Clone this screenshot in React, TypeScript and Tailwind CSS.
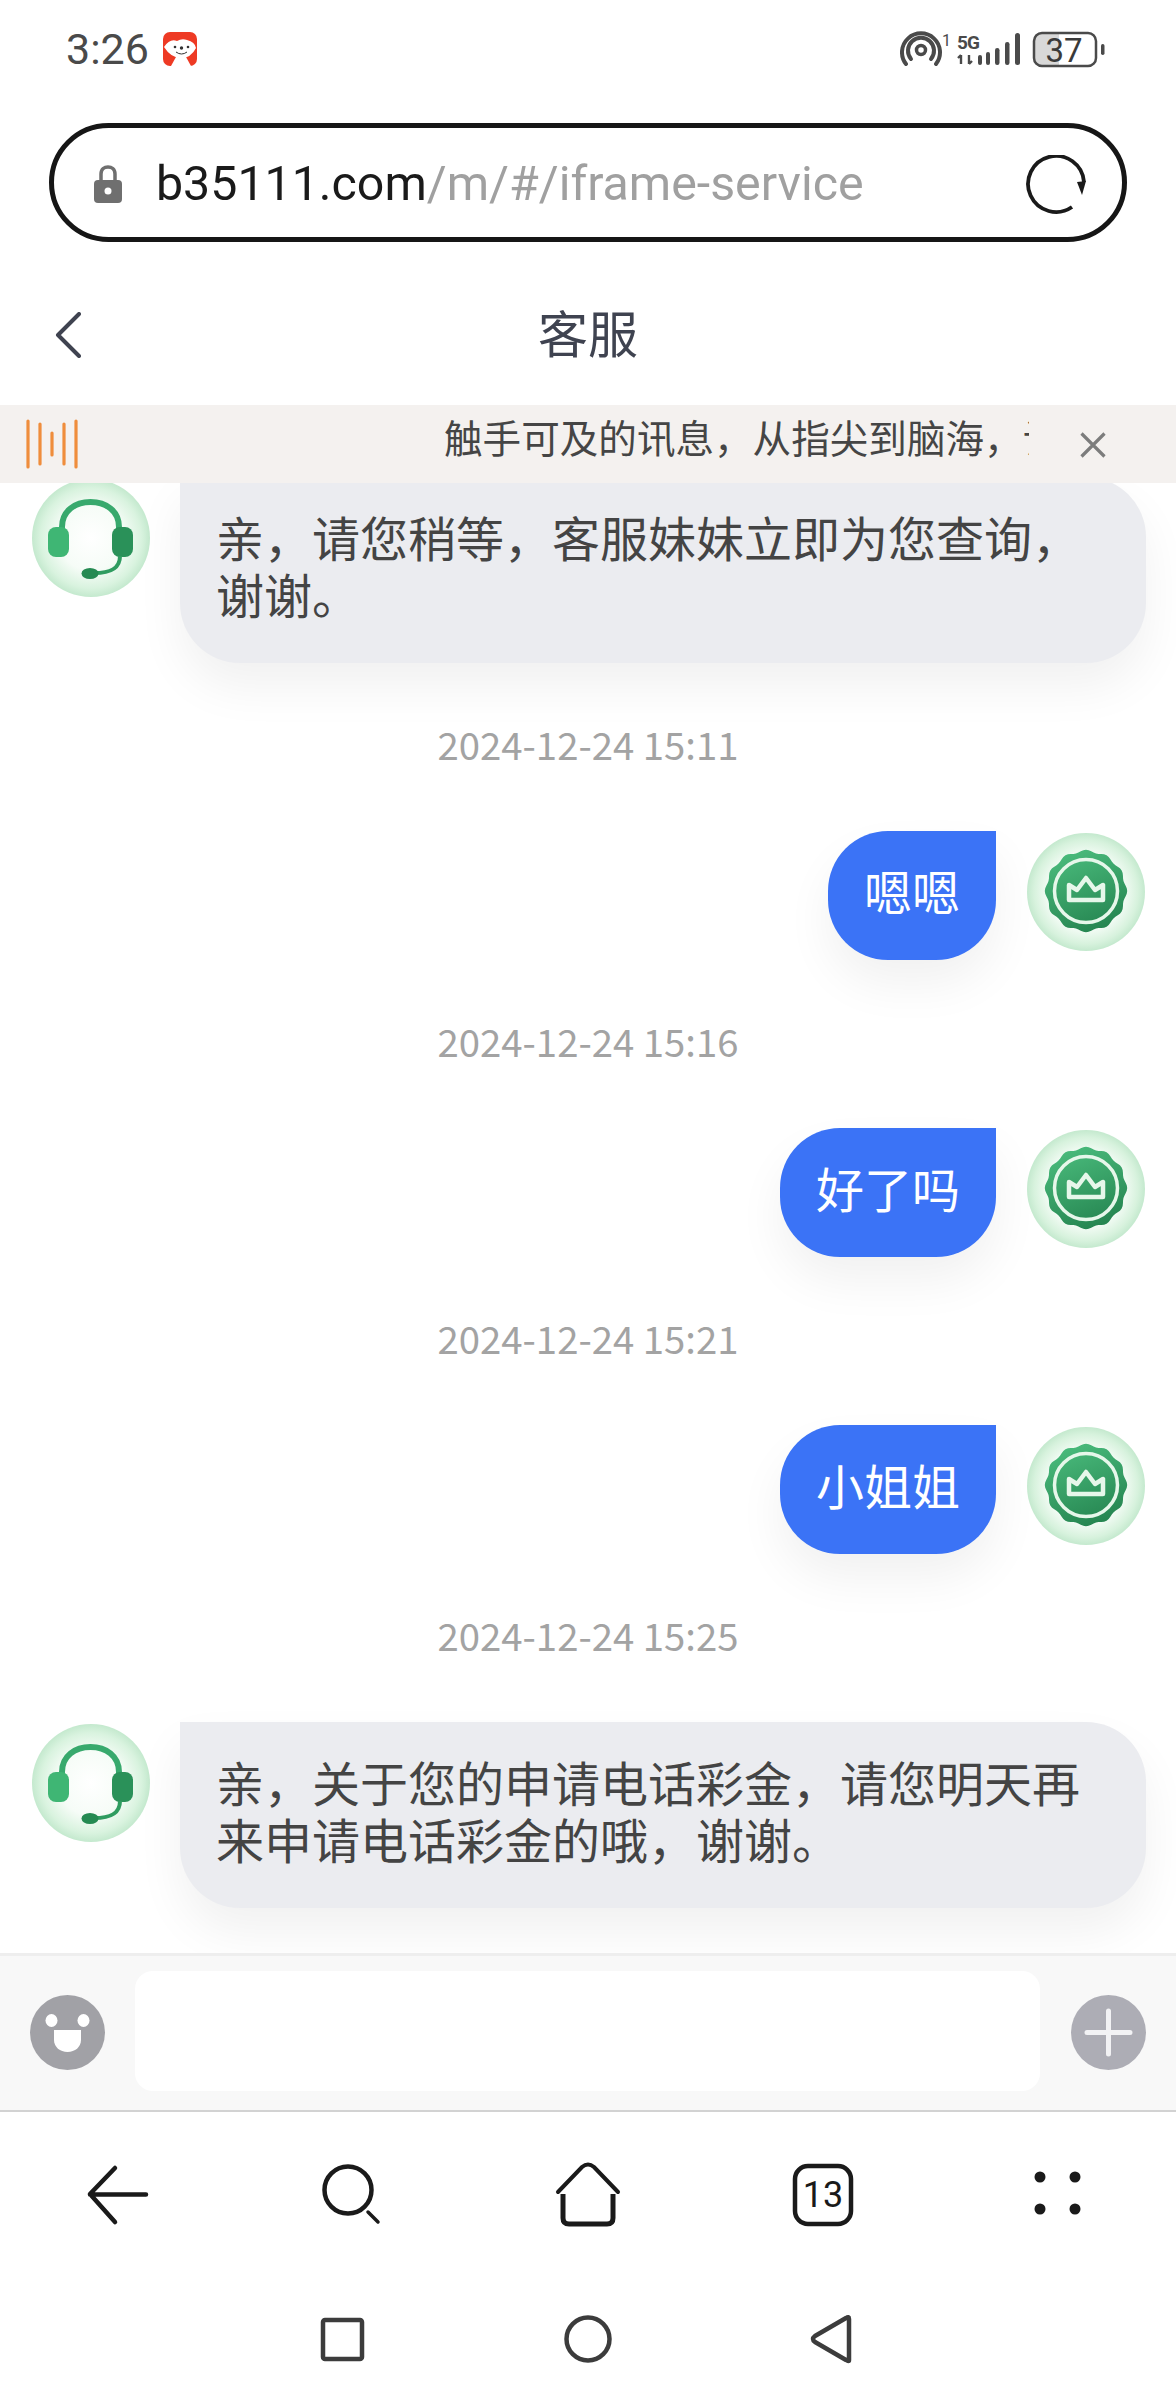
import React from "react";

const cjk = "font-['Noto_Sans_CJK_SC','Noto_Sans',sans-serif]";
const C = "\uFF0C";

function AgentAvatar() {
  return (
    <svg viewBox="0 0 118 118" className="w-[118px] h-[118px] shrink-0 mt-[2px]">
      <defs>
        <radialGradient id="ag" cx="50%" cy="50%" r="50%">
          <stop offset="0%" stopColor="#ffffff" />
          <stop offset="55%" stopColor="#f6fcf7" />
          <stop offset="85%" stopColor="#d9f3df" />
          <stop offset="100%" stopColor="#c4e9ce" />
        </radialGradient>
      </defs>
      <circle cx="59" cy="59" r="59" fill="url(#ag)" />
      <path d="M30 50 V48 C30 32 43 23 58.500 23 C74 23 87 32 87 48 V50" fill="none" stroke="#38a96d" strokeWidth="6" />
      <rect x="16" y="48" width="21" height="30" rx="8" fill="#3fb674" />
      <rect x="80" y="48" width="21" height="30" rx="8" fill="#2a9159" />
      <path d="M88 77 C88 90 78 94 62 94" fill="none" stroke="#2f9c60" strokeWidth="4" />
      <ellipse cx="58" cy="94.500" rx="8.500" ry="5.500" fill="#258a52" />
    </svg>
  );
}

function UserAvatar() {
  const pts: string[] = [];
  for (let i = 0; i < 96; i++) {
    const a = (i / 96) * Math.PI * 2;
    const r = 40 + 1.2 * Math.cos(a * 12);
    pts.push(`${(59 + r * Math.sin(a)).toFixed(2)},${(58 - r * Math.cos(a)).toFixed(2)}`);
  }
  return (
    <svg viewBox="0 0 118 118" className="w-[118px] h-[118px] shrink-0">
      <defs>
        <radialGradient id="ug" cx="50%" cy="50%" r="50%">
          <stop offset="0%" stopColor="#ffffff" />
          <stop offset="65%" stopColor="#f2fbf4" />
          <stop offset="88%" stopColor="#d7f2dd" />
          <stop offset="100%" stopColor="#c4e9ce" />
        </radialGradient>
        <linearGradient id="ub" x1="0.3" y1="0" x2="0.7" y2="1">
          <stop offset="0%" stopColor="#4abb7c" />
          <stop offset="100%" stopColor="#24834f" />
        </linearGradient>
      </defs>
      <circle cx="59" cy="59" r="59" fill="url(#ug)" />
      <polygon points={pts.join(" ")} fill="url(#ub)" />
      <circle cx="59" cy="58" r="31.500" fill="none" stroke="#e6f7ea" strokeWidth="3.500" />
      <path d="M42 52 L50 57 L59 45 L68 57 L76 52 V67 H42 Z" fill="none" stroke="#e6f7ea" strokeWidth="4.500" strokeLinejoin="round" />
    </svg>
  );
}

function StatusBar() {
  return (
    <div className="h-[100px] mb-[23px] pl-[66px] pr-[68px] flex items-center justify-between text-[#4a4a4a]">
      <div className="flex items-center gap-[14px] -mt-[2px]">
        <span className="text-[43px] leading-none font-['Roboto',sans-serif]">3:26</span>
        <svg viewBox="0 0 34 34" className="w-[34px] h-[34px]">
          <rect width="34" height="34" rx="7" fill="#ee3a24" />
          <path d="M1 15 Q7 6 14 9 Q19 6 24 8 Q32 10 33 16 Q28 26 18 26 Q8 26 1 15 Z" fill="#fff" />
          <path d="M8 34 L13 25 H23 L28 34 Z" fill="#fff" />
          <circle cx="12" cy="15" r="1.300" fill="#333" />
          <circle cx="25" cy="15" r="1.300" fill="#333" />
          <circle cx="18.500" cy="16" r="1.700" fill="#333" />
          <path d="M13 20 Q18.500 24 24 20" fill="none" stroke="#333" strokeWidth="1" />
        </svg>
      </div>
      <svg viewBox="900 28 208 42" className="w-[208px] h-[42px] -mt-[2px]" fill="none">
        <circle cx="921" cy="50" r="4.500" stroke="#4a4a4a" strokeWidth="3.500" />
        <path d="M911 59 A 13 13 0 1 1 931 59" stroke="#4a4a4a" strokeWidth="4" strokeLinecap="round" />
        <path d="M906 64 A 19 19 0 1 1 936 64" stroke="#4a4a4a" strokeWidth="4" strokeLinecap="round" />
        <text x="942" y="46" fontSize="16" fill="#4a4a4a" fontFamily="Roboto">1</text>
        <text x="957" y="49" fontSize="19" fontWeight="700" fill="#4a4a4a" fontFamily="Roboto" textLength="23">5G</text>
        <path d="M961 55 V64 M961 55 L958 58 M969 55 V64 M969 64 L972 61" stroke="#4a4a4a" strokeWidth="2.400" />
        <rect x="978" y="55" width="4" height="10" rx="2" fill="#4a4a4a" />
        <rect x="986" y="52" width="4" height="13" rx="2" fill="#4a4a4a" />
        <rect x="995" y="48" width="4.500" height="17" rx="2.200" fill="#4a4a4a" />
        <rect x="1005" y="42" width="4.500" height="23" rx="2.200" fill="#4a4a4a" />
        <rect x="1015" y="33" width="5" height="32" rx="2.500" fill="#4a4a4a" />
        <path d="M1040 33 H1059 V66 H1040 Q1034 66 1034 60 V39 Q1034 33 1040 33 Z" fill="#d8d8d8" />
        <rect x="1034" y="33" width="62" height="33" rx="8" stroke="#4a4a4a" strokeWidth="2.500" />
        <text x="1064" y="62" fontSize="33" fill="#3a3a3a" textAnchor="middle" fontFamily="Roboto">37</text>
        <rect x="1101" y="44" width="3.500" height="11" rx="1.700" fill="#4a4a4a" />
      </svg>
    </div>
  );
}

function UrlBar() {
  return (
    <div className="mx-[49px] h-[119px] rounded-full border-[5px] border-[#161616] flex items-center pl-[40px] pr-[36px]">
      <svg viewBox="0 0 28 38" className="w-[28px] h-[38px] shrink-0 mr-[34px] mt-[2px]">
        <path d="M7 16 V9 C7 4 10.500 2 14 2 C17.500 2 21 4 21 9 V16" fill="none" stroke="#6f6f6f" strokeWidth="3.500" />
        <rect x="0" y="15" width="28" height="23" rx="4" fill="#6f6f6f" />
        <circle cx="14" cy="26" r="3.500" fill="#fff" />
      </svg>
      <div className="flex-1 text-[48.3px] leading-none font-['Roboto',sans-serif] whitespace-nowrap mt-[4px]">
        <span className="text-[#1a1a1a]">b35111.com</span>
        <span className="text-[#a0a0a0]">/m/#/iframe-service</span>
      </div>
      <svg viewBox="0 0 60 60" className="w-[60px] h-[60px] shrink-0 mt-[5px]" fill="none">
        <path d="M46 52 A 28 28 0 1 1 58 27" stroke="#1a1a1a" strokeWidth="3.800" />
        <path d="M51 27 L60 26 L56 40 Z" fill="#1a1a1a" />
      </svg>
    </div>
  );
}

function Header() {
  return (
    <div className="mt-[19px] h-[144px] relative flex items-center justify-center">
      <svg viewBox="0 0 26 46" className="absolute left-[55px] top-[51px] w-[26px] h-[46px]" fill="none">
        <path d="M24 2 L3 23 L24 44" stroke="#3f4350" strokeWidth="4" strokeLinecap="round" strokeLinejoin="round" />
      </svg>
      <span className={`text-[50px] leading-none text-[#3f4350] -mt-[5px] ${cjk}`}>客服</span>
    </div>
  );
}

function Notice() {
  return (
    <div className="h-[78px] bg-[#f4f1ef] flex items-center relative shrink-0 z-10">
      <svg viewBox="0 0 54 50" className="absolute left-[26px] top-[14px] w-[54px] h-[50px]" fill="none" stroke="#ef8d3c" strokeWidth="3.200" strokeLinecap="round">
        <path d="M2 2 V48 M14 5 V45 M26 14 V36 M38 5 V45 M50 2 V48" />
      </svg>
      <div className={`absolute left-[444px] top-[7px] w-[585px] overflow-hidden whitespace-nowrap text-[38.6px] leading-[48px] text-[#454545] ${cjk}`}>
        {`触手可及的讯息${C}从指尖到脑海${C}让`}
      </div>
      <svg viewBox="0 0 26 26" className="absolute left-[1080px] top-[27px] w-[26px] h-[26px]" fill="none" stroke="#7c7c7c" strokeWidth="3.200">
        <path d="M1.500 1.500 L24.500 24.500 M24.500 1.500 L1.500 24.500" />
      </svg>
    </div>
  );
}

function Stamp({ t }: { t: string }) {
  return (
    <div className={`h-[48px] my-[60px] shrink-0 text-center text-[38.3px] leading-[42px] text-[#a3a3a3] ${cjk}`}>{t}</div>
  );
}

function Agent({ lines }: { lines: string[] }) {
  return (
    <div className="flex shrink-0 items-start pl-[32px] pr-[30px] gap-[30px]">
      <AgentAvatar />
      <div className={`flex-1 bg-[#ebecf0] rounded-[60px] rounded-tl-none px-[36px] pt-[31px] pb-[41px] text-[48px] leading-[57px] text-[#444444] shadow-[0_24px_48px_rgba(0,0,0,0.06)] ${cjk}`}>
        {lines.map((l) => (
          <div key={l} className="whitespace-nowrap">{l}</div>
        ))}
      </div>
    </div>
  );
}

function Me({ text }: { text: string }) {
  return (
    <div className="flex shrink-0 items-start justify-end pr-[31px] gap-[31px]">
      <div className={`bg-[#3b73f6] rounded-[60px] rounded-tr-none px-[36px] pt-[31px] pb-[41px] text-[48px] leading-[57px] text-white shadow-[0_24px_48px_rgba(0,0,0,0.06)] ${cjk}`}>
        {text}
      </div>
      <div className="mt-[2px]"><UserAvatar /></div>
    </div>
  );
}

function Chat() {
  return (
    <div className="h-[1470px] overflow-hidden flex flex-col justify-end pb-[45px] bg-white">
      <Agent lines={[`亲${C}请您稍等${C}客服妹妹立即为您查询${C}`, "谢谢。"]} />
      <Stamp t="2024-12-24 15:11" />
      <Me text="嗯嗯" />
      <Stamp t="2024-12-24 15:16" />
      <Me text="好了吗" />
      <Stamp t="2024-12-24 15:21" />
      <Me text="小姐姐" />
      <Stamp t="2024-12-24 15:25" />
      <Agent lines={[`亲${C}关于您的申请电话彩金${C}请您明天再`, `来申请电话彩金的哦${C}谢谢。`]} />
    </div>
  );
}

function InputBar() {
  return (
    <div className="h-[159px] bg-[#f8f8f8] border-t-[3px] border-t-[#eeeeee] border-b-[2px] border-b-[#d2d2d2] flex items-start pl-[30px] pr-[30px]">
      <svg viewBox="0 0 75 75" className="w-[75px] h-[75px] mt-[39px] shrink-0">
        <circle cx="37.500" cy="37.500" r="37.500" fill="#a1a1a6" />
        <ellipse cx="21.500" cy="25.500" rx="6" ry="6.500" fill="#fff" />
        <ellipse cx="53.500" cy="25.500" rx="6" ry="6.500" fill="#fff" />
        <path d="M24 35 H51 V45 C51 52 45 57 37.500 57 C30 57 24 52 24 45 Z" fill="#fff" />
      </svg>
      <div className="ml-[30px] mt-[15px] w-[905px] h-[120px] bg-white rounded-[18px]" />
      <svg viewBox="0 0 75 75" className="w-[75px] h-[75px] ml-[31px] mt-[39px] shrink-0">
        <circle cx="37.500" cy="37.500" r="37.500" fill="#adadb5" />
        <path d="M37.500 16 V59 M16 37.500 H59" stroke="#f2f2f4" strokeWidth="5" strokeLinecap="round" />
      </svg>
    </div>
  );
}

function BrowserNav() {
  return (
    <div className="h-[200px]">
      <svg viewBox="0 0 1176 200" className="w-full h-full" fill="none" stroke="#1a1a1a">
        <path d="M146 82.500 H90 M115 56 L90 82 L115 110" strokeWidth="4.500" strokeLinecap="round" strokeLinejoin="round" />
        <circle cx="348" cy="78" r="23.500" strokeWidth="4.500" />
        <path d="M368 100 L378 110" strokeWidth="3.500" strokeLinecap="round" />
        <path d="M558 80 L582 55 Q588 50 594 55 L618 80" strokeWidth="4" strokeLinecap="round" />
        <path d="M563 82 V106 Q563 112 569 112 H607 Q613 112 613 106 V82" strokeWidth="5" />
        <rect x="795" y="54" width="56" height="58" rx="13" strokeWidth="4.500" />
        <text x="823" y="95" fontSize="36" fill="#1a1a1a" stroke="none" textAnchor="middle" fontFamily="Roboto">13</text>
        <g fill="#1a1a1a" stroke="none">
          <circle cx="1040" cy="65" r="5.500" />
          <circle cx="1075" cy="65" r="5.500" />
          <circle cx="1040" cy="97" r="5.500" />
          <circle cx="1075" cy="97" r="5.500" />
        </g>
      </svg>
    </div>
  );
}

function SystemNav() {
  return (
    <div className="h-[88px]">
      <svg viewBox="0 0 1176 88" className="w-full h-full" fill="none" stroke="#3c3c3c" strokeWidth="4.500">
        <rect x="323" y="8" width="39" height="39" rx="2" />
        <circle cx="588" cy="27" r="21.500" />
        <path d="M849 7 V48 Q849 50 846 48 L815 30 Q811 27 815 24 L846 6 Q849 4 849 7 Z" strokeLinejoin="round" />
      </svg>
    </div>
  );
}

export default function App() {
  return (
    <div className="w-[1176px] h-[2400px] bg-white overflow-hidden flex flex-col">
      <StatusBar />
      <UrlBar />
      <Header />
      <Notice />
      <Chat />
      <InputBar />
      <BrowserNav />
      <SystemNav />
    </div>
  );
}
